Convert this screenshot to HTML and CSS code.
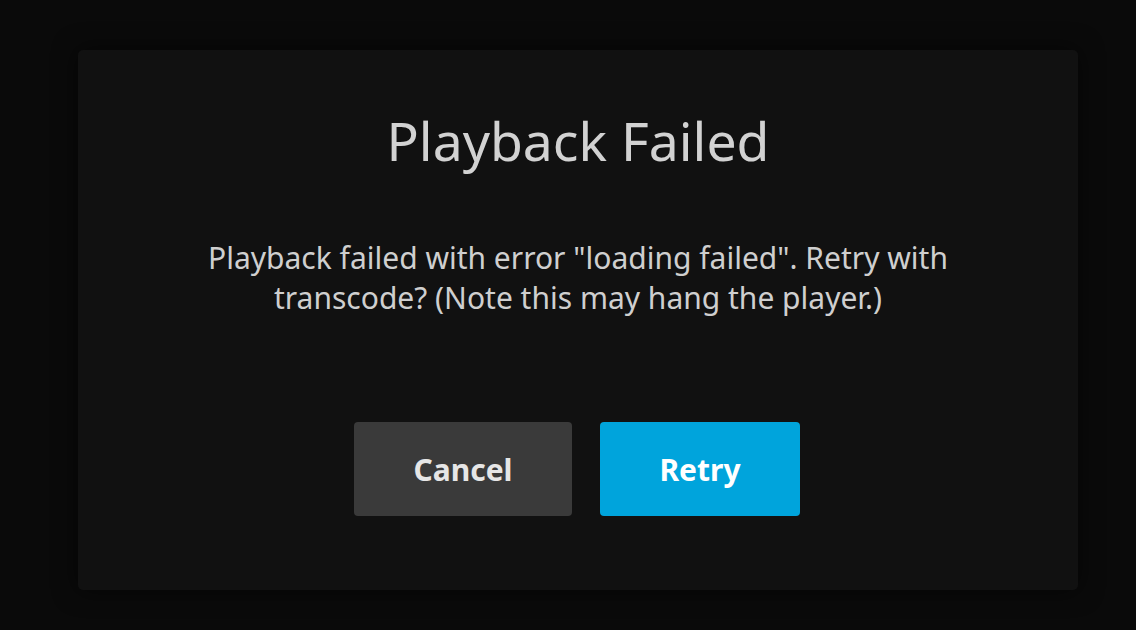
FILE: index.html
```html
<!DOCTYPE html>
<html lang="en">
<head>
<meta charset="utf-8">
<title>Playback Failed</title>
<link rel="stylesheet" href="styles.css">
</head>
<body>
<div class="dialog" role="dialog">
  <h1 class="dialog-title">Playback Failed</h1>
  <p class="dialog-text">Playback failed with error "loading failed". Retry with transcode? (Note this may hang the player.)</p>
  <div class="dialog-buttons">
    <button class="btn btn-cancel">Cancel</button>
    <button class="btn btn-retry">Retry</button>
  </div>
</div>
</body>
</html>
```
FILE: styles.css
```css
html, body {
  margin: 0;
  padding: 0;
  height: 100%;
}
body {
  background: #0a0a0a;
  font-family: "Noto Sans", "Open Sans", sans-serif;
  padding-top: 50px;
  padding-left: 78px;
  box-sizing: border-box;
}
.dialog {
  box-sizing: border-box;
  width: 1000px;
  height: 540px;
  background: #111111;
  border-radius: 5px;
  box-shadow: 0 0 24px rgba(0, 0, 0, 0.6);
  padding: 58px 100px 0;
  display: flex;
  flex-direction: column;
  align-items: center;
  text-align: center;
}
.dialog-title {
  margin: 0;
  font-size: 53.5px;
  line-height: 65px;
  font-weight: 400;
  color: #d2d2d2;
}
.dialog-text {
  margin: 65px 0 0;
  font-size: 30px;
  line-height: 40px;
  color: #cfcfcf;
}
.dialog-buttons {
  margin-top: 104px;
  padding-right: 2px;
  display: flex;
  gap: 28px;
  justify-content: center;
}
.btn {
  font-family: "Noto Sans", "Open Sans", sans-serif;
  font-size: 30px;
  font-weight: 700;
  height: 94px;
  border: none;
  border-radius: 4px;
  padding: 0;
  cursor: pointer;
}
.btn-cancel {
  width: 218px;
  background: #3a3a3a;
  color: #e6e6e6;
}
.btn-retry {
  width: 200px;
  background: #00a4dc;
  color: #ffffff;
}
```
